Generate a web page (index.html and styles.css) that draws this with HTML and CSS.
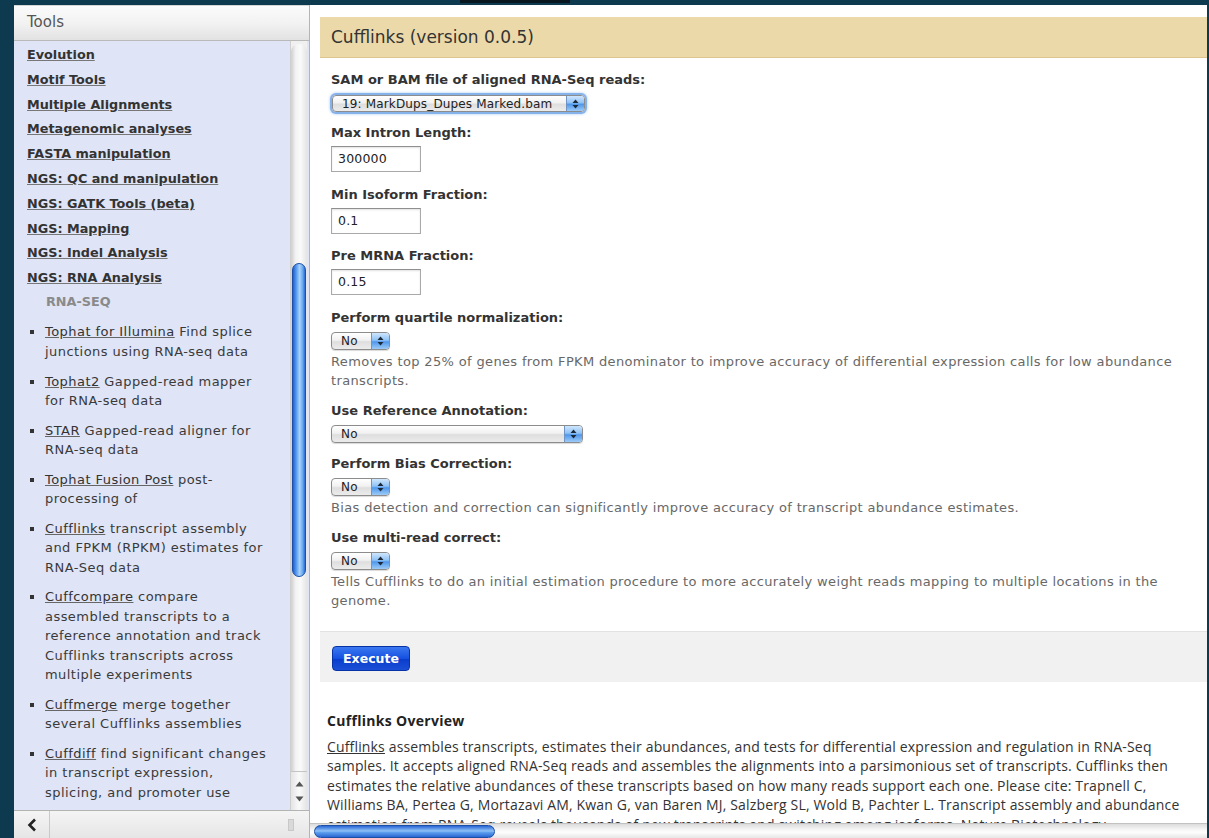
FILE: index.html
```html
<!DOCTYPE html>
<html lang="en">
<head>
<meta charset="utf-8">
<title>Galaxy - Cufflinks</title>
<link rel="stylesheet" href="styles.css">
</head>
<body>
<div class="topbar"><span class="topbar-tab"></span></div>
<div class="frame">
  <aside class="tools">
    <div class="tools-head">Tools</div>
    <div class="tools-body">
      <div class="tools-list">
        <a class="section" href="#">Evolution</a>
        <a class="section" href="#">Motif Tools</a>
        <a class="section" href="#">Multiple Alignments</a>
        <a class="section" href="#">Metagenomic analyses</a>
        <a class="section" href="#">FASTA manipulation</a>
        <a class="section" href="#">NGS: QC and manipulation</a>
        <a class="section" href="#">NGS: GATK Tools (beta)</a>
        <a class="section" href="#">NGS: Mapping</a>
        <a class="section" href="#">NGS: Indel Analysis</a>
        <a class="section" href="#">NGS: RNA Analysis</a>
        <div class="subhead">RNA-SEQ</div>
        <ul class="tool-items">
          <li><a href="#">Tophat for Illumina</a> Find splice junctions using RNA-seq data</li>
          <li><a href="#">Tophat2</a> Gapped-read mapper for RNA-seq data</li>
          <li><a href="#">STAR</a> Gapped-read aligner for RNA-seq data</li>
          <li><a href="#">Tophat Fusion Post</a> post-processing of</li>
          <li><a href="#">Cufflinks</a> transcript assembly and FPKM (RPKM) estimates for RNA-Seq data</li>
          <li><a href="#">Cuffcompare</a> compare assembled transcripts to a reference annotation and track Cufflinks transcripts across multiple experiments</li>
          <li><a href="#">Cuffmerge</a> merge together several Cufflinks assemblies</li>
          <li><a href="#">Cuffdiff</a> find significant changes in transcript expression, splicing, and promoter use</li>
        </ul>
      </div>
      <div class="vscroll">
        <div class="vtrack"><div class="vthumb"></div></div>
        <div class="varrows">
          <svg width="9" height="6" viewBox="0 0 9 6"><path d="M4.5 0.5 L8.5 5.5 L0.5 5.5 Z" fill="#555"/></svg>
          <svg width="9" height="6" viewBox="0 0 9 6"><path d="M0.5 0.5 L8.5 0.5 L4.5 5.5 Z" fill="#555"/></svg>
        </div>
      </div>
    </div>
    <div class="tools-foot">
      <span class="foot-arrow">
        <svg width="10" height="14" viewBox="0 0 10 14"><path d="M8 1.5 L2.5 7 L8 12.5" fill="none" stroke="#222" stroke-width="2.6"/></svg>
      </span>
      <span class="foot-grip"></span>
    </div>
  </aside>

  <main class="center">
    <div class="center-body">
      <form class="tool-form">
        <div class="form-title">Cufflinks (version 0.0.5)</div>
        <div class="form-body">
          <div class="row">
            <label>SAM or BAM file of aligned RNA-Seq reads:</label>
            <div class="select select-file focused"><span>19: MarkDups_Dupes Marked.bam</span><span class="cap"><svg width="7" height="10" viewBox="0 0 7 10"><path d="M3.5 0.5 L6.5 4 L0.5 4 Z M0.5 6 L6.5 6 L3.5 9.5 Z" fill="#1d2a3a"/></svg></span></div>
          </div>
          <div class="row row-input">
            <label>Max Intron Length:</label>
            <div class="input">300000</div>
          </div>
          <div class="row row-input">
            <label>Min Isoform Fraction:</label>
            <div class="input">0.1</div>
          </div>
          <div class="row row-input">
            <label>Pre MRNA Fraction:</label>
            <div class="input">0.15</div>
          </div>
          <div class="row">
            <label>Perform quartile normalization:</label>
            <div class="select select-small"><span>No</span><span class="cap"><svg width="7" height="10" viewBox="0 0 7 10"><path d="M3.5 0.5 L6.5 4 L0.5 4 Z M0.5 6 L6.5 6 L3.5 9.5 Z" fill="#1d2a3a"/></svg></span></div>
            <div class="hint">Removes top 25% of genes from FPKM denominator to improve accuracy of differential expression calls for low abundance transcripts.</div>
          </div>
          <div class="row">
            <label>Use Reference Annotation:</label>
            <div class="select select-wide"><span>No</span><span class="cap"><svg width="7" height="10" viewBox="0 0 7 10"><path d="M3.5 0.5 L6.5 4 L0.5 4 Z M0.5 6 L6.5 6 L3.5 9.5 Z" fill="#1d2a3a"/></svg></span></div>
          </div>
          <div class="row">
            <label>Perform Bias Correction:</label>
            <div class="select select-small"><span>No</span><span class="cap"><svg width="7" height="10" viewBox="0 0 7 10"><path d="M3.5 0.5 L6.5 4 L0.5 4 Z M0.5 6 L6.5 6 L3.5 9.5 Z" fill="#1d2a3a"/></svg></span></div>
            <div class="hint">Bias detection and correction can significantly improve accuracy of transcript abundance estimates.</div>
          </div>
          <div class="row">
            <label>Use multi-read correct:</label>
            <div class="select select-small"><span>No</span><span class="cap"><svg width="7" height="10" viewBox="0 0 7 10"><path d="M3.5 0.5 L6.5 4 L0.5 4 Z M0.5 6 L6.5 6 L3.5 9.5 Z" fill="#1d2a3a"/></svg></span></div>
            <div class="hint">Tells Cufflinks to do an initial estimation procedure to more accurately weight reads mapping to multiple locations in the genome.</div>
          </div>
        </div>
        <div class="form-actions"><span class="btn-execute">Execute</span></div>
      </form>

      <section class="overview">
        <h3>Cufflinks Overview</h3>
        <p><a href="#">Cufflinks</a> assembles transcripts, estimates their abundances, and tests for differential expression and regulation in RNA-Seq samples. It accepts aligned RNA-Seq reads and assembles the alignments into a parsimonious set of transcripts. Cufflinks then estimates the relative abundances of these transcripts based on how many reads support each one. Please cite: Trapnell C, Williams BA, Pertea G, Mortazavi AM, Kwan G, van Baren MJ, Salzberg SL, Wold B, Pachter L. Transcript assembly and abundance estimation from RNA-Seq reveals thousands of new transcripts and switching among isoforms. Nature Biotechnology doi:10.1038/nbt.1621</p>
      </section>
    </div>
    <div class="hscroll"><div class="hthumb"></div></div>
  </main>
</div>
</body>
</html>
```

FILE: styles.css
```css
* { box-sizing: border-box; }

html, body {
  margin: 0;
  height: 838px;
  overflow: hidden;
}

body {
  background: #0e3a4f;
  font-family: "DejaVu Sans", "Liberation Sans", sans-serif;
  color: #333;
  display: flex;
  flex-direction: column;
}

a { color: inherit; }

/* dark strip along the top of the window */
.topbar {
  height: 5px;
  flex: none;
  display: flex;
}
.topbar-tab {
  margin-left: 460px;
  width: 110px;
  height: 3px;
  background: #07161f;
}

.frame {
  flex: 1;
  display: flex;
  min-height: 0;
  padding: 0 2px 0 14px;
}

/* ---------- tool panel ---------- */
.tools {
  width: 295px;
  flex: none;
  display: flex;
  flex-direction: column;
  background: #dfe4f6;
}

.tools-head {
  height: 36px;
  flex: none;
  padding: 0 13px;
  line-height: 33px;
  font-size: 15px;
  color: #555;
  background: linear-gradient(#fbfbfb, #f1f1f1 55%, #e2e2e2);
  border-top: 1px solid #d6d6d6;
  border-bottom: 1px solid #b9b9b9;
}

.tools-body {
  flex: 1;
  display: flex;
  min-height: 0;
}

.tools-list {
  flex: 1;
  min-width: 0;
  padding: 5px 18px 0 13px;
  overflow: hidden;
}

.section {
  display: block;
  font-size: 12.8px;
  font-weight: bold;
  line-height: 18px;
  margin-bottom: 6.8px;
  color: #333;
  text-decoration-color: #777;
}

.subhead {
  font-size: 12.8px;
  font-weight: bold;
  color: #8a8a8a;
  line-height: 18px;
  margin: -1px 0 11.5px 19px;
}

.tool-items {
  list-style: none;
  margin: 0;
  padding: 0 0 0 18px;
  font-size: 13px;
  letter-spacing: 0.45px;
  line-height: 19.4px;
  color: #3a3a3a;
}
.tool-items li {
  position: relative;
  margin-bottom: 10.3px;
}
.tool-items li::before {
  content: "";
  position: absolute;
  left: -15px;
  top: 8px;
  width: 4px;
  height: 4px;
  background: #333;
}
.tool-items a {
  color: #333;
  text-decoration-color: #666;
}

/* vertical scroller of the tool panel */
.vscroll {
  width: 17px;
  flex: none;
  margin-right: 2px;
  display: flex;
  flex-direction: column;
  background: #f0f0f0;
  border-left: 1px solid #cfcfcf;
}
.vtrack {
  flex: 1;
  margin-top: 3px;
  border-radius: 9px 9px 0 0;
  background: linear-gradient(90deg, #cfcfcf, #f3f3f3 30%, #fafafa 60%, #e4e4e4);
  position: relative;
  border-bottom: 1px solid #c4c4c4;
}
.vthumb {
  position: absolute;
  left: 1px;
  right: 1px;
  top: 219px;
  height: 314px;
  border-radius: 8px;
  background: linear-gradient(90deg, #1f5fcf, #5f9fee 30%, #a9d3fb 55%, #6aa9ef 80%, #2a6ad6);
  border: 1px solid #1b4fa8;
}
.varrows {
  height: 38px;
  flex: none;
  display: flex;
  flex-direction: column;
  align-items: center;
  justify-content: space-around;
  padding: 4px 0;
  background: linear-gradient(90deg, #e4e4e4, #fafafa 50%, #e4e4e4);
}

.tools-foot {
  height: 28px;
  flex: none;
  display: flex;
  align-items: center;
  background: linear-gradient(#f4f4f4, #e6e6e6);
  border-top: 1px solid #b3b3b3;
}
.foot-arrow {
  width: 36px;
  height: 100%;
  display: flex;
  align-items: center;
  justify-content: center;
  border-right: 1px solid #c9c9c9;
}
.foot-grip {
  margin-left: auto;
  margin-right: 15px;
  width: 6px;
  height: 12px;
  background: #d9d9d9;
  border: 1px solid #c8c8c8;
}

/* ---------- centre panel ---------- */
.center {
  flex: 1;
  min-width: 0;
  display: flex;
  flex-direction: column;
  background: #fff;
  border-left: 1px solid #b4b4b4;
}

.center-body {
  flex: 1;
  min-height: 0;
  overflow: hidden;
  padding: 12px 0 0 10px;
}

.form-title {
  height: 41px;
  line-height: 41px;
  padding-left: 11px;
  font-size: 17px;
  color: #333;
  background: #ebd9a9;
  border-bottom: 1px solid #dcc58f;
}

.form-body {
  padding: 13px 0 0 11px;
}

.row {
  margin-bottom: 12px;
}
.row-input {
  margin-bottom: 13.5px;
}
.row label {
  display: block;
  font-size: 13px;
  font-weight: bold;
  line-height: 18px;
  color: #333;
}

.input {
  margin-top: 4px;
  width: 90px;
  height: 26px;
  border: 1px solid #a9a9a9;
  border-top-color: #8f8f8f;
  box-shadow: inset 0 1px 2px rgba(0,0,0,0.12);
  padding: 0 6px;
  font-size: 12.5px;
  letter-spacing: 0.2px;
  line-height: 24px;
  color: #222;
}

.select {
  margin-top: 5px;
  height: 18px;
  display: flex;
  align-items: stretch;
  border: 1px solid #8c8c8c;
  border-radius: 4px;
  overflow: hidden;
  background: linear-gradient(#ffffff, #f1f1f1 45%, #dedede 55%, #ececec);
  font-size: 12px;
  letter-spacing: 0.15px;
  color: #222;
  box-shadow: 0 1px 1px rgba(0,0,0,0.15);
}
.select > span:first-child {
  padding-left: 9px;
  line-height: 16px;
  white-space: nowrap;
}
.select .cap {
  margin-left: auto;
  width: 18px;
  flex: none;
  display: flex;
  align-items: center;
  justify-content: center;
  border-left: 1px solid #6f94c4;
  background: linear-gradient(#cfe6fd, #8fc2f6 45%, #4f97eb 55%, #9ccbf8);
}
.select-small { width: 59px; }
.select-wide { width: 252px; }
.select-file {
  width: 253px;
  margin-top: 6px;
  height: 17px;
  margin-left: 1px;
}
.focused {
  box-shadow: 0 0 0 2px #86b2ec, 0 0 3px 2px #a9c9f2;
}

.hint {
  margin-top: 2px;
  font-size: 13px;
  letter-spacing: 0.35px;
  line-height: 19px;
  color: #686868;
  padding-right: 30px;
}

.form-actions {
  margin-top: 21px;
  height: 51px;
  padding: 14px 0 0 12px;
  background: #f1f1f1;
  border-top: 1px solid #e2e2e2;
}
.btn-execute {
  display: inline-block;
  width: 78px;
  height: 25px;
  line-height: 24px;
  text-align: center;
  font-size: 12.5px;
  font-weight: bold;
  color: #fff;
  border-radius: 4px;
  border: 1px solid #0833a6;
  background: linear-gradient(#3b78f0, #1551e0 50%, #0a3ccc 51%, #1b4fd6);
}

.overview {
  padding: 30px 6px 0 7px;
  font-family: "Open Sans", "DejaVu Sans", sans-serif;
}
.overview h3 {
  margin: 0 0 7px;
  font-size: 14px;
  letter-spacing: 0.3px;
  line-height: 18px;
  font-weight: bold;
  color: #222;
}
.overview p {
  margin: 0;
  font-size: 14px;
  letter-spacing: 0.16px;
  line-height: 19.5px;
  color: #333;
}

/* horizontal scroller of the centre panel */
.hscroll {
  height: 15px;
  flex: none;
  position: relative;
  background: linear-gradient(#dcdcdc, #f6f6f6 40%, #fdfdfd 60%, #e6e6e6);
  border-top: 1px solid #c2c2c2;
}
.hthumb {
  position: absolute;
  left: 4px;
  top: 1px;
  width: 181px;
  height: 13px;
  border-radius: 7px;
  border: 1px solid #1b4fa8;
  background: linear-gradient(#2a67d6, #8fc2f7 45%, #5a9cec 60%, #2b66d3);
}
```
